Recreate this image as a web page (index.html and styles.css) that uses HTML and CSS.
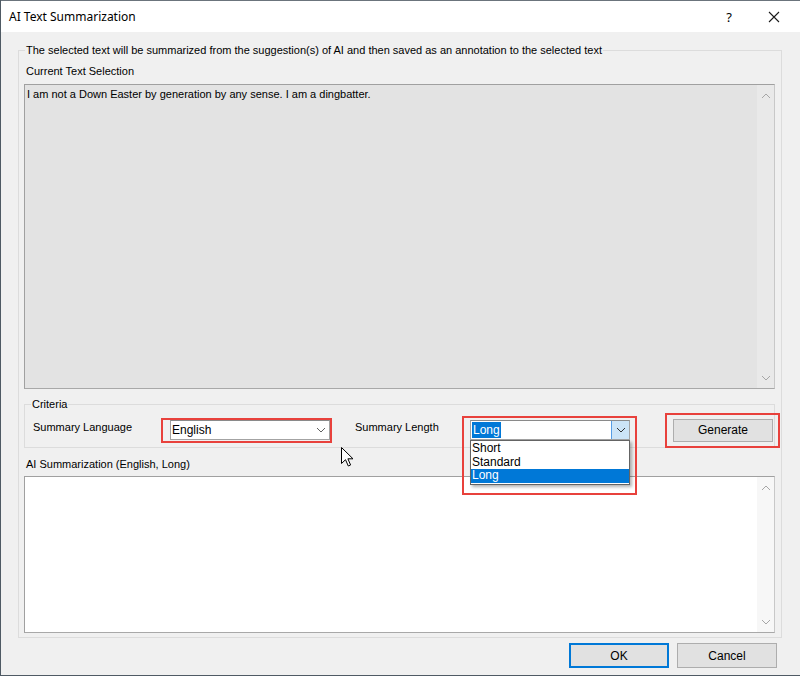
FILE: index.html
```html
<!DOCTYPE html>
<html lang="en">
<head>
    <meta charset="UTF-8">
    <title>AI Text Summarization</title>
    <link rel="stylesheet" href="styles.css">
</head>
<body>
    <div class="dialog">
        <div class="titlebar">
            <span class="title">AI Text Summarization</span>
            <span class="help">?</span>
            <span class="close">
                <svg width="12" height="12" viewBox="0 0 12 12"><path d="M1 1 L11 11 M11 1 L1 11" stroke="#1a1a1a" stroke-width="1.1" fill="none"/></svg>
            </span>
        </div>

        <div class="content">
            <fieldset class="group main-group">
                <legend>The selected text will be summarized from the suggestion(s) of AI and then saved as an annotation to the selected text</legend>

                <div class="label">Current Text Selection</div>
                <div class="textbox readonly selection-box">
                    <div class="text">I am not a Down Easter by generation by any sense. I am a dingbatter.</div>
                    <div class="scrollbar">
                        <svg width="10" height="6" viewBox="0 0 10 6"><path d="M1 5 L5 1 L9 5" stroke="#a6a6a6" fill="none"/></svg>
                        <svg width="10" height="6" viewBox="0 0 10 6"><path d="M1 1 L5 5 L9 1" stroke="#a6a6a6" fill="none"/></svg>
                    </div>
                </div>

                <fieldset class="group criteria">
                    <legend>Criteria</legend>
                    <div class="criteria-row">
                        <span class="row-label lang-label">Summary Language</span>
                        <div class="combo lang-combo marked">
                            <span class="combo-text">English</span>
                            <span class="combo-arrow">
                                <svg width="10" height="6" viewBox="0 0 10 6"><path d="M1 1 L5 5 L9 1" stroke="#606060" fill="none"/></svg>
                            </span>
                        </div>
                        <span class="row-label len-label">Summary Length</span>
                        <div class="combo len-combo marked">
                            <span class="combo-text"><span class="sel">Long</span></span>
                            <span class="combo-arrow open">
                                <svg width="10" height="6" viewBox="0 0 10 6"><path d="M1 1 L5 5 L9 1" stroke="#333" fill="none"/></svg>
                            </span>
                            <ul class="droplist">
                                <li>Short</li>
                                <li>Standard</li>
                                <li class="active">Long</li>
                            </ul>
                        </div>
                        <button class="btn generate marked">Generate</button>
                    </div>
                </fieldset>

                <div class="label summary-label">AI Summarization (English, Long)</div>
                <div class="textbox result-box">
                    <div class="text"></div>
                    <div class="scrollbar">
                        <svg width="10" height="6" viewBox="0 0 10 6"><path d="M1 5 L5 1 L9 5" stroke="#a6a6a6" fill="none"/></svg>
                        <svg width="10" height="6" viewBox="0 0 10 6"><path d="M1 1 L5 5 L9 1" stroke="#a6a6a6" fill="none"/></svg>
                    </div>
                </div>
            </fieldset>

            <div class="buttons">
                <button class="btn default">OK</button>
                <button class="btn">Cancel</button>
            </div>
        </div>

        <svg class="cursor" width="13" height="20" viewBox="0 0 13 20">
            <path d="M0.5 0.5 L0.5 16.5 L4.5 12.7 L7.3 19 L9.6 18 L6.9 11.8 L12 11.8 Z" fill="#fff" stroke="#000" stroke-width="1"/>
        </svg>
    </div>
</body>
</html>
```

FILE: styles.css
```css
body {
    margin: 0;
    font-family: "Liberation Sans", Arial, sans-serif;
    font-size: 11px;
    color: #000;
    background: #f0f0f0;
}

.dialog {
    position: relative;
    width: 800px;
    height: 676px;
    box-sizing: border-box;
    background: #f0f0f0;
    border-left: 1px solid #4f5a64;
    border-bottom: 1px solid #4f5a64;
    overflow: hidden;
}

/* title bar */
.titlebar {
    display: flex;
    align-items: center;
    height: 32px;
    box-sizing: border-box;
    background: #fff;
    border-top: 1px solid #6b747c;
    font-family: "Noto Sans", "Open Sans", sans-serif;
    font-size: 12px;
}
.titlebar .title { padding-left: 8px; flex: 1; }
.titlebar .help { width: 14px; text-align: center; margin-right: 32px; font-size: 13px; }
.titlebar .close { width: 12px; height: 12px; margin-right: 20px; display: flex; }

.content {
    padding: 12px 18px 0 17px;
}

/* group boxes */
.group {
    margin: 0;
    border: 1px solid #dcdcdc;
    min-width: 0;
}
.group legend {
    line-height: 13px;
    padding: 0 1px;
}
.main-group {
    padding: 8px 6px 4px 5px;
}
.main-group > legend { margin-left: 1px; }

.label {
    line-height: 13px;
    margin-left: 2px;
    margin-bottom: 6px;
}
.summary-label { margin-top: 10px; margin-bottom: 5px; }

/* text boxes */
.textbox {
    display: flex;
    box-sizing: border-box;
    background: #fff;
    border: 1px solid #a0a0a0;
    border-right-color: #c8c8c8;
    border-bottom-color: #a8a8a8;
}
.textbox.readonly { background: #e3e3e3; }
.selection-box { height: 305px; }
.result-box { height: 157px; }
.textbox .text {
    flex: 1;
    padding: 3px 2px;
    line-height: 13px;
}
.scrollbar {
    width: 17px;
    display: flex;
    flex-direction: column;
    justify-content: space-between;
    align-items: center;
    padding: 8px 0 7px;
    background: #f7f7f7;
}
.readonly .scrollbar { background: #e9e9e9; }

/* criteria */
.criteria {
    margin-top: 9px;
    padding: 7px 0 5px 8px;
}
.criteria > legend { margin-left: -2px; }
.criteria-row {
    display: flex;
    align-items: center;
    height: 24px;
}
.row-label {
    align-self: flex-start;
    padding-top: 3px;
    line-height: 13px;
}
.lang-label { width: 137px; }
.len-label { width: 115px; margin-left: 25px; }

.combo {
    position: relative;
    display: flex;
    width: 160px;
    height: 20px;
    box-sizing: border-box;
    background: #fff;
    border: 1px solid #a3a3a3;
    border-top-color: #8a8a8a;
}
.combo-text {
    flex: 1;
    padding: 0 1px;
    display: flex;
    align-items: center;
    font-size: 12px;
}
.combo-text .sel {
    background: #0078d7;
    color: #fff;
    padding: 1px 1px;
}
.combo-arrow {
    width: 17px;
    display: flex;
    align-items: center;
    justify-content: center;
}
.combo-arrow.open {
    background: #cce4f7;
    border-left: 1px solid #569de5;
}

.droplist {
    position: absolute;
    left: -1px;
    top: 19px;
    width: 158px;
    margin: 0;
    padding: 1px 0;
    list-style: none;
    background: #fff;
    border: 1px solid #646464;
    box-shadow: 2px 2px 3px rgba(0, 0, 0, 0.3);
    font-size: 12px;
    z-index: 2;
}
.droplist li {
    line-height: 13.5px;
    padding-left: 1px;
}
.droplist li.active { background: #0078d7; color: #fff; }

/* buttons */
.btn {
    font-family: inherit;
    font-size: 12px;
    width: 100px;
    height: 25px;
    background: #e1e1e1;
    border: 1px solid #adadad;
    color: #000;
    padding: 0;
}
.generate { margin-left: 43px; height: 23px; }
.btn.default { border: 2px solid #0078d7; }
.buttons {
    display: flex;
    justify-content: flex-end;
    gap: 8px;
    padding-right: 5px;
    margin-top: 5px;
}

/* red highlight frames from the screenshot */
.marked { position: relative; }
.marked::after {
    content: "";
    position: absolute;
    border: 2px solid #e8413c;
    pointer-events: none;
}
.lang-combo::after { left: -10px; right: -3px; top: -3px; bottom: -4px; }
.len-combo::after { left: -9px; right: -8px; top: -5px; bottom: -56px; }
.generate::after { left: -9px; right: -8px; top: -7px; bottom: -7px; }

.cursor {
    position: absolute;
    left: 340px;
    top: 447px;
}
```
